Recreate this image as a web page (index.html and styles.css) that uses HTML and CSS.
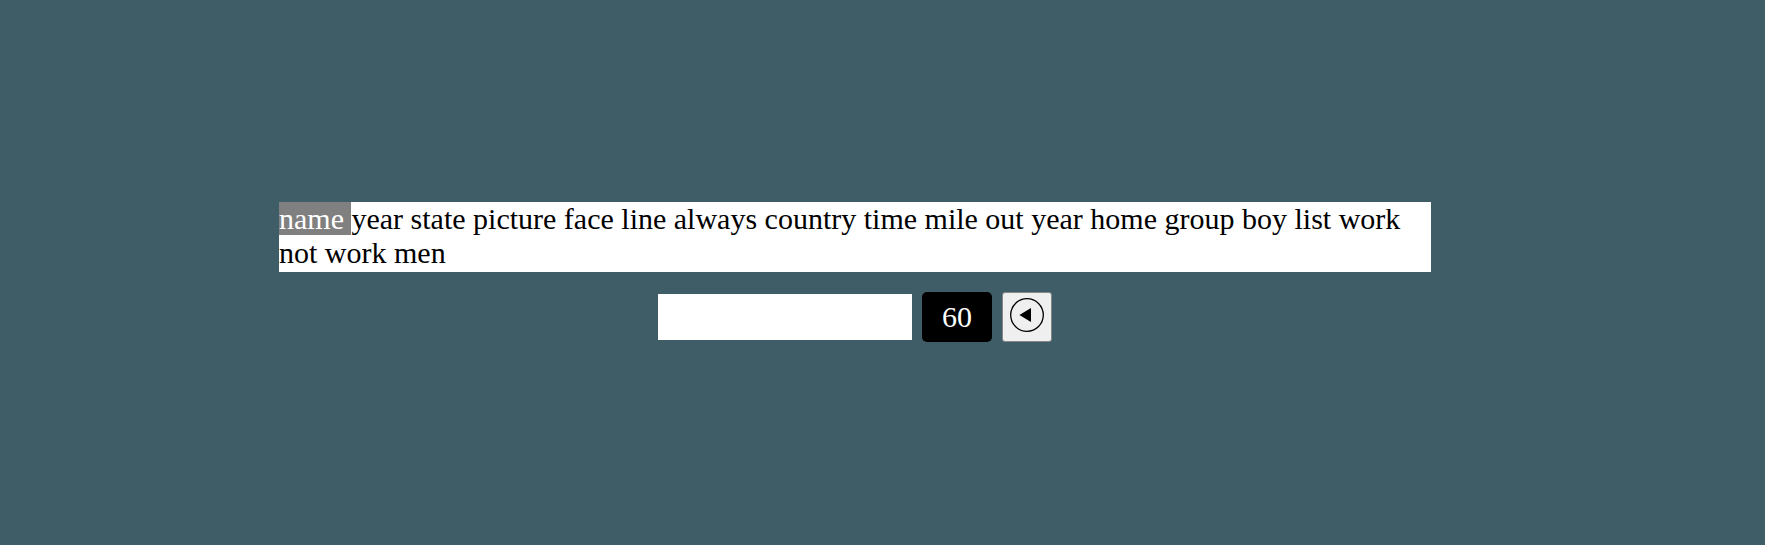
FILE: index.html
```html
<!DOCTYPE html>
<html lang="en">
<head>
<meta charset="utf-8">
<title>Typing test</title>
<link rel="stylesheet" href="styles.css">
</head>
<body>
<main class="typing">
  <div class="words"><span class="current">name </span>year state picture face line always country time mile out year home group boy list work not work men</div>
  <div class="controls">
    <input class="entry" type="text" aria-label="Type here">
    <div class="timer">60</div>
    <button class="restart" type="button" aria-label="Restart">
      <svg class="icon" viewBox="0 0 34 34"><circle cx="17" cy="17" r="16.3" fill="none" stroke="#000" stroke-width="1.3"/><path d="M9.4 17 21 10V24Z"/></svg>
    </button>
  </div>
</main>
</body>
</html>
```
FILE: styles.css
```css
body {
  margin: 0;
  background: #3f5d67;
  font: 30px/34px "Liberation Serif", "Times New Roman", serif;
  color: #000;
}
.typing {
  width: 1152px;
  padding: 202px 0 0 279px;
}
.words {
  height: 70px;
  background: #fff;
}
.current {
  background: #808080;
  color: #fff;
}
.controls {
  display: flex;
  justify-content: center;
  align-items: center;
  gap: 10px;
  margin-top: 20px;
}
.entry {
  box-sizing: border-box;
  width: 254px;
  height: 46px;
  padding: 0 5px;
  border: 0;
  background: #fff;
  font: inherit;
}
.timer {
  width: 70px;
  height: 50px;
  border-radius: 5px;
  background: #000;
  color: #fff;
  line-height: 50px;
  text-align: center;
}
.restart {
  box-sizing: border-box;
  display: flex;
  justify-content: center;
  width: 50px;
  height: 50px;
  padding: 5px 0 0;
  border: 1px solid #858585;
  border-radius: 3px;
  background: #efefef;
}
.icon {
  width: 34px;
  height: 34px;
}
```
